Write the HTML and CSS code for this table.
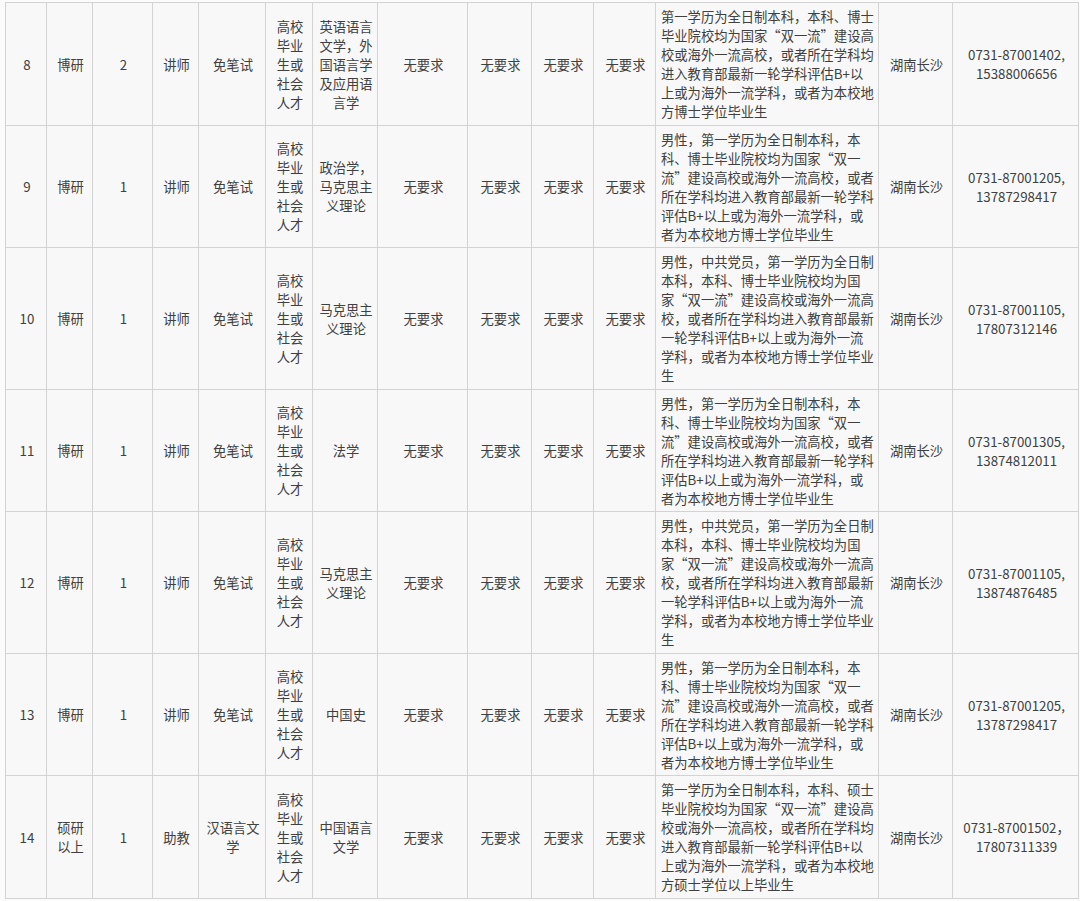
FILE: index.html
```html
<!DOCTYPE html>
<html lang="zh-CN">
<head>
<meta charset="utf-8">
<title>招聘岗位表</title>
<link rel="stylesheet" href="styles.css">
</head>
<body>
<table class="sheet">
  <colgroup>
    <col class="c-no"><col class="c-edu"><col class="c-num"><col class="c-title"><col class="c-exam">
    <col class="c-src"><col class="c-major"><col class="c-req"><col class="c-req2"><col class="c-req3">
    <col class="c-req3"><col class="c-desc"><col class="c-place"><col class="c-phone">
  </colgroup>
  <tbody>
    <tr>
      <td>8</td><td>博研</td><td>2</td><td>讲师</td><td>免笔试</td>
      <td>高校毕业生或社会人才</td>
      <td>英语语言文学，外国语言学及应用语言学</td>
      <td>无要求</td><td>无要求</td><td>无要求</td><td>无要求</td>
      <td class="desc">第一学历为全日制本科，本科、博士<br>毕业院校均为国家“双一流”建设高<br>校或海外一流高校，或者所在学科均<br>进入教育部最新一轮学科评估B+以<br>上或为海外一流学科，或者为本校地<br>方博士学位毕业生</td>
      <td>湖南长沙</td>
      <td>0731-87001402, 15388006656</td>
    </tr>
    <tr>
      <td>9</td><td>博研</td><td>1</td><td>讲师</td><td>免笔试</td>
      <td>高校毕业生或社会人才</td>
      <td>政治学，马克思主义理论</td>
      <td>无要求</td><td>无要求</td><td>无要求</td><td>无要求</td>
      <td class="desc">男性，第一学历为全日制本科，本<br>科、博士毕业院校均为国家“双一<br>流”建设高校或海外一流高校，或者<br>所在学科均进入教育部最新一轮学科<br>评估B+以上或为海外一流学科，或<br>者为本校地方博士学位毕业生</td>
      <td>湖南长沙</td>
      <td>0731-87001205, 13787298417</td>
    </tr>
    <tr>
      <td>10</td><td>博研</td><td>1</td><td>讲师</td><td>免笔试</td>
      <td>高校毕业生或社会人才</td>
      <td>马克思主义理论</td>
      <td>无要求</td><td>无要求</td><td>无要求</td><td>无要求</td>
      <td class="desc">男性，中共党员，第一学历为全日制<br>本科，本科、博士毕业院校均为国<br>家“双一流”建设高校或海外一流高<br>校，或者所在学科均进入教育部最新<br>一轮学科评估B+以上或为海外一流<br>学科，或者为本校地方博士学位毕业<br>生</td>
      <td>湖南长沙</td>
      <td>0731-87001105, 17807312146</td>
    </tr>
    <tr>
      <td>11</td><td>博研</td><td>1</td><td>讲师</td><td>免笔试</td>
      <td>高校毕业生或社会人才</td>
      <td>法学</td>
      <td>无要求</td><td>无要求</td><td>无要求</td><td>无要求</td>
      <td class="desc">男性，第一学历为全日制本科，本<br>科、博士毕业院校均为国家“双一<br>流”建设高校或海外一流高校，或者<br>所在学科均进入教育部最新一轮学科<br>评估B+以上或为海外一流学科，或<br>者为本校地方博士学位毕业生</td>
      <td>湖南长沙</td>
      <td>0731-87001305, 13874812011</td>
    </tr>
    <tr>
      <td>12</td><td>博研</td><td>1</td><td>讲师</td><td>免笔试</td>
      <td>高校毕业生或社会人才</td>
      <td>马克思主义理论</td>
      <td>无要求</td><td>无要求</td><td>无要求</td><td>无要求</td>
      <td class="desc">男性，中共党员，第一学历为全日制<br>本科，本科、博士毕业院校均为国<br>家“双一流”建设高校或海外一流高<br>校，或者所在学科均进入教育部最新<br>一轮学科评估B+以上或为海外一流<br>学科，或者为本校地方博士学位毕业<br>生</td>
      <td>湖南长沙</td>
      <td>0731-87001105, 13874876485</td>
    </tr>
    <tr>
      <td>13</td><td>博研</td><td>1</td><td>讲师</td><td>免笔试</td>
      <td>高校毕业生或社会人才</td>
      <td>中国史</td>
      <td>无要求</td><td>无要求</td><td>无要求</td><td>无要求</td>
      <td class="desc">男性，第一学历为全日制本科，本<br>科、博士毕业院校均为国家“双一<br>流”建设高校或海外一流高校，或者<br>所在学科均进入教育部最新一轮学科<br>评估B+以上或为海外一流学科，或<br>者为本校地方博士学位毕业生</td>
      <td>湖南长沙</td>
      <td>0731-87001205, 13787298417</td>
    </tr>
    <tr>
      <td>14</td><td>硕研以上</td><td>1</td><td>助教</td><td>汉语言文学</td>
      <td>高校毕业生或社会人才</td>
      <td>中国语言文学</td>
      <td>无要求</td><td>无要求</td><td>无要求</td><td>无要求</td>
      <td class="desc">第一学历为全日制本科，本科、硕士<br>毕业院校均为国家“双一流”建设高<br>校或海外一流高校，或者所在学科均<br>进入教育部最新一轮学科评估B+以<br>上或为海外一流学科，或者为本校地<br>方硕士学位以上毕业生</td>
      <td>湖南长沙</td>
      <td>0731-87001502，17807311339</td>
    </tr>
  </tbody>
</table>
</body>
</html>
```
FILE: styles.css
```css
html, body {
  margin: 0;
  padding: 0;
  background: #fbfbfb;
}

body {
  font-family: "Noto Sans CJK SC", "Noto Sans", sans-serif;
  font-size: 13.3px;
  color: #404040;
  overflow: hidden;
}

.sheet {
  margin: 2px 0 0 5px;
  border-collapse: collapse;
  table-layout: fixed;
  width: 1073px;
  background: #f8f8f8;
}

.sheet td {
  border: 1px solid #d3d3d3;
  padding: 4px 3px 3.5px 5px;
  line-height: 19px;
  text-align: center;
  vertical-align: middle;
}

.sheet td.desc {
  text-align: left;
  white-space: nowrap;
  padding-left: 5px;
  padding-right: 2px;
}

.c-no { width: 41px; }
.c-edu { width: 46px; }
.c-num { width: 60px; }
.c-title { width: 46px; }
.c-exam { width: 67px; }
.c-src { width: 47px; }
.c-major { width: 65px; }
.c-req { width: 90px; }
.c-req2 { width: 64px; }
.c-req3 { width: 62px; }
.c-desc { width: 223px; }
.c-place { width: 74px; }
.c-phone { width: 126px; }
```
